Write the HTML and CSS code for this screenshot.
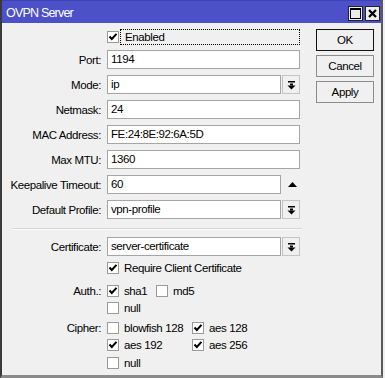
FILE: index.html
```html
<!DOCTYPE html>
<html>
<head>
<meta charset="utf-8">
<link rel="stylesheet" href="styles.css">
</head>
<body>
<div class="window">
  <div class="titlebar">
    <span class="title">OVPN Server</span>
    <div class="tb-buttons">
      <span class="tb-btn"><svg width="11" height="11" viewBox="0 0 11 11"><rect x="0.5" y="0.5" width="10" height="10" fill="none" stroke="#000" stroke-width="1"/><rect x="0" y="0" width="11" height="2" fill="#000"/></svg></span>
      <span class="tb-btn"><svg width="11" height="11" viewBox="0 0 11 11"><path d="M2 2 L9 9 M9 2 L2 9" stroke="#000" stroke-width="2.2" fill="none"/></svg></span>
    </div>
  </div>
  <div class="content">
    <div class="form">
      <div class="row r-enabled">
        <span class="label"></span>
        <div class="ctrl check-line">
          <span class="box"><svg width="10" height="10" viewBox="0 0 10 10"><path d="M1.5 4.5 L3.8 7 L8.5 1.8" stroke="#000" stroke-width="2" fill="none"/></svg></span>
          <span class="focus-text">Enabled</span>
        </div>
      </div>
      <div class="row field-row r-first">
        <span class="label">Port:</span>
        <div class="ctrl"><span class="field">1194</span></div>
      </div>
      <div class="row field-row">
        <span class="label">Mode:</span>
        <div class="ctrl"><span class="field">ip</span><span class="drop"><svg width="9" height="10" viewBox="0 0 9 10"><rect x="1" y="1" width="7" height="1.5" fill="#000"/><rect x="3" y="3.5" width="3" height="2" fill="#000"/><path d="M0.5 5.5 L8.5 5.5 L4.5 9.5 Z" fill="#000"/></svg></span></div>
      </div>
      <div class="row field-row">
        <span class="label">Netmask:</span>
        <div class="ctrl"><span class="field">24</span></div>
      </div>
      <div class="row field-row">
        <span class="label">MAC Address:</span>
        <div class="ctrl"><span class="field">FE:24:8E:92:6A:5D</span></div>
      </div>
      <div class="row field-row">
        <span class="label">Max MTU:</span>
        <div class="ctrl"><span class="field">1360</span></div>
      </div>
      <div class="row field-row">
        <span class="label">Keepalive Timeout:</span>
        <div class="ctrl"><span class="field">60</span><span class="spin"><svg width="9" height="5" viewBox="0 0 9 5"><path d="M0 5 L4.5 0 L9 5 Z" fill="#000"/></svg></span></div>
      </div>
      <div class="row field-row">
        <span class="label">Default Profile:</span>
        <div class="ctrl"><span class="field">vpn-profile</span><span class="drop"><svg width="9" height="10" viewBox="0 0 9 10"><rect x="1" y="1" width="7" height="1.5" fill="#000"/><rect x="3" y="3.5" width="3" height="2" fill="#000"/><path d="M0.5 5.5 L8.5 5.5 L4.5 9.5 Z" fill="#000"/></svg></span></div>
      </div>
      <div class="separator"></div>
      <div class="row field-row r-cert">
        <span class="label">Certificate:</span>
        <div class="ctrl"><span class="field">server-certificate</span><span class="drop"><svg width="9" height="10" viewBox="0 0 9 10"><rect x="1" y="1" width="7" height="1.5" fill="#000"/><rect x="3" y="3.5" width="3" height="2" fill="#000"/><path d="M0.5 5.5 L8.5 5.5 L4.5 9.5 Z" fill="#000"/></svg></span></div>
      </div>
      <div class="row check-row r-require">
        <span class="label"></span>
        <div class="ctrl check-line">
          <span class="box"><svg width="10" height="10" viewBox="0 0 10 10"><path d="M1.5 4.5 L3.8 7 L8.5 1.8" stroke="#000" stroke-width="2" fill="none"/></svg></span>
          <span class="ctext">Require Client Certificate</span>
        </div>
      </div>
      <div class="row check-row r-auth">
        <span class="label">Auth.:</span>
        <div class="ctrl grid-auth">
          <div class="check-line"><span class="box"><svg width="10" height="10" viewBox="0 0 10 10"><path d="M1.5 4.5 L3.8 7 L8.5 1.8" stroke="#000" stroke-width="2" fill="none"/></svg></span><span class="ctext">sha1</span></div>
          <div class="check-line"><span class="box"></span><span class="ctext">md5</span></div>
        </div>
      </div>
      <div class="row check-row r-tight">
        <span class="label"></span>
        <div class="ctrl check-line"><span class="box"></span><span class="ctext">null</span></div>
      </div>
      <div class="row check-row r-cipher">
        <span class="label">Cipher:</span>
        <div class="ctrl grid-cipher">
          <div class="check-line"><span class="box"></span><span class="ctext">blowfish 128</span></div>
          <div class="check-line"><span class="box"><svg width="10" height="10" viewBox="0 0 10 10"><path d="M1.5 4.5 L3.8 7 L8.5 1.8" stroke="#000" stroke-width="2" fill="none"/></svg></span><span class="ctext">aes 128</span></div>
        </div>
      </div>
      <div class="row check-row r-tight">
        <span class="label"></span>
        <div class="ctrl grid-cipher">
          <div class="check-line"><span class="box"><svg width="10" height="10" viewBox="0 0 10 10"><path d="M1.5 4.5 L3.8 7 L8.5 1.8" stroke="#000" stroke-width="2" fill="none"/></svg></span><span class="ctext">aes 192</span></div>
          <div class="check-line"><span class="box"><svg width="10" height="10" viewBox="0 0 10 10"><path d="M1.5 4.5 L3.8 7 L8.5 1.8" stroke="#000" stroke-width="2" fill="none"/></svg></span><span class="ctext">aes 256</span></div>
        </div>
      </div>
      <div class="row check-row r-last">
        <span class="label"></span>
        <div class="ctrl check-line"><span class="box"></span><span class="ctext">null</span></div>
      </div>
    </div>
    <div class="actions">
      <span class="btn btn-default">OK</span>
      <span class="btn">Cancel</span>
      <span class="btn">Apply</span>
    </div>
  </div>
</div>
</body>
</html>
```

FILE: styles.css
```css
* { box-sizing: border-box; }
html, body {
  margin: 0;
  padding: 0;
  background: #f0f0f0;
}
body {
  width: 385px;
  height: 378px;
  overflow: hidden;
  font-family: "Liberation Sans", Arial, sans-serif;
  font-size: 11.5px;
  letter-spacing: -0.4px;
  color: #000;
}
.window {
  width: 383px;
  height: 378px;
  border-left: 2px solid #3a3a3a;
  border-right: 2px solid #5a5a5a;
  border-bottom: 3px solid #8a8a8a;
  background: #f0f0f0;
  display: flex;
  flex-direction: column;
}
.titlebar {
  height: 23px;
  background: #4c50c9;
  border-top: 1px solid #3e42b0;
  display: flex;
  align-items: center;
  justify-content: space-between;
  padding: 0 1px 0 4px;
  flex: none;
}
.title {
  color: #fff;
  font-size: 12.5px;
  letter-spacing: -0.8px;
  margin-top: 1px;
}
.tb-buttons {
  display: flex;
  gap: 2px;
  margin-top: 2px;
}
.tb-btn {
  width: 15px;
  height: 15px;
  background: #ededed;
  border: 1px solid #222;
  display: flex;
  align-items: center;
  justify-content: center;
}
.content {
  display: flex;
  align-items: flex-start;
}
.form {
  width: 298px;
  display: flex;
  flex-direction: column;
}
.row {
  display: flex;
  align-items: center;
}
.label {
  width: 99px;
  flex: none;
  text-align: right;
  white-space: nowrap;
}
.ctrl {
  margin-left: 6px;
  width: 193px;
  display: flex;
  align-items: center;
}
.r-enabled { margin-top: 6px; height: 16px; }
.field-row { height: 19px; margin-top: 6px; }
.r-first { margin-top: 5px; }
.field {
  flex: 1;
  height: 19px;
  background: #fff;
  border: 1px solid #a5a5a5;
  padding-left: 3px;
  line-height: 17px;
  white-space: nowrap;
  overflow: hidden;
}
.drop {
  width: 18px;
  height: 19px;
  margin-left: 1px;
  border: 1px solid #c4c4c4;
  background: #f0f0f0;
  display: flex;
  align-items: center;
  justify-content: center;
  flex: none;
}
.spin {
  width: 18px;
  height: 19px;
  margin-left: 1px;
  display: flex;
  align-items: center;
  justify-content: center;
  flex: none;
  padding-left: 3px;
}
.separator {
  margin: 9px 0 0 10px;
  width: 290px;
  height: 2px;
  border-top: 1px solid #d6d6d6;
  border-bottom: 1px solid #fafafa;
}
.r-cert { margin-top: 7px; }
.check-row { height: 16px; }
.r-require { margin-top: 4px; }
.r-auth { margin-top: 7px; }
.r-tight { margin-top: 1px; }
.r-cipher { margin-top: 4px; }
.r-last { margin-top: 2px; }
.check-line {
  display: flex;
  align-items: center;
}
.box {
  width: 12px;
  height: 12px;
  background: #fff;
  border: 1px solid #9a9a9a;
  display: flex;
  align-items: center;
  justify-content: center;
  flex: none;
}
.ctext {
  margin-left: 5px;
  white-space: nowrap;
}
.focus-text {
  margin-left: 1px;
  flex: 1;
  height: 16px;
  border: 1px dotted #000;
  padding-left: 4px;
  line-height: 14px;
}
.grid-auth {
  display: grid;
  grid-template-columns: 49px auto;
}
.grid-cipher {
  display: grid;
  grid-template-columns: 85px auto;
}
.actions {
  margin-left: 16px;
  margin-top: 6px;
  display: flex;
  flex-direction: column;
  gap: 4px;
}
.btn {
  width: 58px;
  height: 22px;
  border: 1px solid #8c8c8c;
  background: #f0f0f0;
  display: flex;
  align-items: center;
  justify-content: center;
}
.btn-default {
  border: 1px solid #111;
}
```
